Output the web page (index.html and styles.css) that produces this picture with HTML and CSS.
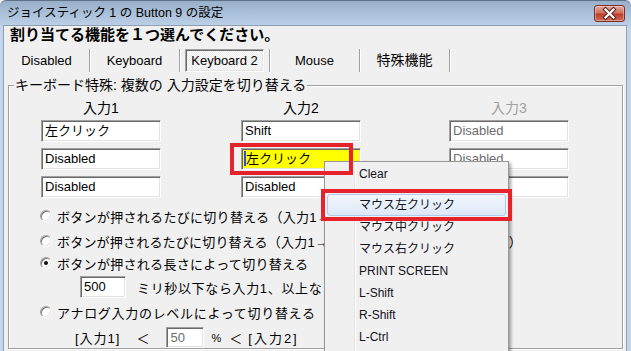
FILE: index.html
```html
<!DOCTYPE html>
<html lang="ja">
<head>
<meta charset="utf-8">
<title>ジョイスティック 1 の Button 9 の設定</title>
<link rel="stylesheet" href="styles.css">
</head>
<body>

<div class="dlg">
	<div class="dlg-title">
		<span class="dlg-title-text">ジョイスティック 1 の Button 9 の設定</span>
		<span class="dlg-close">
			<svg width="29" height="15" viewBox="0 0 29 15">
				<path d="M10.5 3.5 L18.5 11.5 M18.5 3.5 L10.5 11.5" stroke="#5b231d" stroke-width="4.2" stroke-linecap="square"/>
				<path d="M10.5 3.5 L18.5 11.5 M18.5 3.5 L10.5 11.5" stroke="#fff" stroke-width="2.2" stroke-linecap="square"/>
			</svg>
		</span>
	</div>

	<div class="dlg-body">
		<h1 class="dlg-head">割り当てる機能を１つ選んでください。</h1>

		<div class="tabs">
			<span class="tab tab-first">Disabled</span>
			<span class="tab">Keyboard</span>
			<span class="tab"><span class="tab-on">Keyboard 2</span></span>
			<span class="tab">Mouse</span>
			<span class="tab tab-jp">特殊機能</span>
		</div>

		<fieldset class="grp">
			<legend>キーボード特殊: 複数の 入力設定を切り替える</legend>

			<div class="cols">
				<div class="col">
					<div class="col-h">入力1</div>
					<div class="tb">左クリック</div>
					<div class="tb">Disabled</div>
					<div class="tb">Disabled</div>
				</div>
				<div class="col">
					<div class="col-h">入力2</div>
					<div class="tb">Shift</div>
					<div class="tb tb-hl"><i class="caret"></i>左クリック</div>
					<div class="tb">Disabled</div>
				</div>
				<div class="col col-off">
					<div class="col-h">入力3</div>
					<div class="tb">Disabled</div>
					<div class="tb">Disabled</div>
					<div class="tb">Disabled</div>
				</div>
			</div>

			<div class="opts">
				<div class="opt opt-1"><i class="rb"></i>ボタンが押されるたびに切り替える（入力1→入力2）</div>
				<div class="opt opt-2"><i class="rb"></i>ボタンが押されるたびに切り替える（入力1→入力2→入力3→入力1→…の順）</div>
				<div class="opt opt-3"><i class="rb rb-on"></i>ボタンが押される長さによって切り替える</div>
				<div class="opt-sub">
					<div class="tb tb-ms">500</div>
					<span class="sub-text">ミリ秒以下なら入力1、以上なら入力2</span>
				</div>
				<div class="opt opt-4"><i class="rb"></i>アナログ入力のレベルによって切り替える</div>
				<div class="opt-lv">
					<span class="lv-in">[入力1]</span>
					<span class="lv-lt lv-lt-1">＜</span>
					<div class="tb tb-pc">50</div>
					<span class="lv-pc">%</span>
					<span class="lv-lt lv-lt-2">＜</span>
					<span class="lv-in lv-in-2">[入力2]</span>
				</div>
			</div>
		</fieldset>
	</div>
</div>

<!-- popup menu over the dialog -->
<div class="ctx">
	<div class="ctx-item">Clear</div>
	<div class="ctx-sep"></div>
	<div class="ctx-item ctx-on">マウス左クリック</div>
	<div class="ctx-item">マウス中クリック</div>
	<div class="ctx-item">マウス右クリック</div>
	<div class="ctx-item">PRINT SCREEN</div>
	<div class="ctx-item">L-Shift</div>
	<div class="ctx-item">R-Shift</div>
	<div class="ctx-item">L-Ctrl</div>
</div>

<!-- red annotation boxes -->
<div class="mark mark-field"></div>
<div class="mark mark-item"></div>

</body>
</html>
```

FILE: styles.css
```css
html, body{margin:0; height:100%; overflow:hidden; background:#f0f0f0;}
body{font-family:"Liberation Sans","Noto Sans CJK JP",sans-serif; font-size:13px; color:#000;}

.dlg{
	width:631px;
	height:420px;
	box-sizing:border-box;
	padding:0 4px 0 3px;
	border-top:1px solid #5f7189;
	border-radius:6px 6px 0 0;
	background:linear-gradient(#98afca, #bdd1e8 25px, #c3d6eb 26px, #c3d6eb);
}
.dlg-title{display:flex; align-items:flex-start; height:24px;}
.dlg-title-text{flex:1; padding:4px 0 0 4px; line-height:16px; font-size:12.5px; color:#000;}
.dlg-close{
	width:31px; height:17px;
	margin:4px 2px 0 0;
	box-sizing:border-box;
	border:1px solid #7a2f27;
	border-radius:3px;
	background:linear-gradient(#e5a99e, #d0705f 45%, #bd3f2d 55%, #cf6d57);
	box-shadow:inset 0 0 0 1px rgba(255,255,255,.35);
}
.dlg-close svg{display:block;}

.dlg-body{
	height:395px;
	background:#f0f0f0;
	border:1px solid #8d9db2;
	border-bottom:0;
}
.dlg-head{margin:0 0 0 6px; font-size:15px; line-height:18px; font-weight:bold;}

/* button strip */
.tabs{display:flex; height:23px; margin-top:5px;}
.tab{
	width:89px; flex:none;
	text-align:center; line-height:23px;
	border-right:1px solid #a0a0a0;
	box-shadow:1px 0 0 #fff;
	font-size:13px;
}
.tab-first{width:85px;}
.tab-jp{font-size:14px;}
.tab-on{
	display:block; margin:0 5px 0 5px; height:23px;
	box-sizing:border-box;
	line-height:21px;
	border:1px solid; border-color:#a0a0a0 #fff #fff #a0a0a0;
	box-shadow:inset 1px 1px 0 #696969, inset -1px -1px 0 #e3e3e3;
	background:repeating-conic-gradient(#fff 0 25%, #e9e9e9 0 50%) 0 0/2px 2px;
}

/* group box */
.grp{
	margin:5px 3px 0 4px;
	padding:0;
	min-width:0;
	border:1px solid #a0a0a0;
	box-shadow:1px 1px 0 #fff, inset 1px 1px 0 #fff;
}
.grp legend{
	margin-left:5px; padding:0 1px;
	font-size:14px; line-height:16px;
	background:#f0f0f0;
}
.cols{display:grid; grid-template-columns:200px 208px 120px; margin:7px 0 0 32px;}
.col-h{width:120px; text-align:center; font-size:14px; line-height:16px; margin-bottom:4px;}
.col-off .col-h{color:#a0a0a0;}
.col-off .tb{color:#6d6d6d;}

.tb{
	width:120px; height:22px;
	box-sizing:border-box;
	margin-bottom:6px;
	padding-left:3px;
	line-height:20px;
	white-space:nowrap; overflow:hidden;
	background:#fff;
	border:1px solid; border-color:#a0a0a0 #fff #fff #a0a0a0;
	box-shadow:inset 1px 1px 0 #696969, inset -1px -1px 0 #e3e3e3;
}
.tb:last-child{margin-bottom:0;}
.tb-hl{background:#ffff00;}
.caret{display:inline-block; width:2px; height:15px; margin-left:-1px; vertical-align:-3px; background:#2d50d6;}

/* radio options */
.opts{margin:7px 0 0 31px; letter-spacing:.3px;}
.opt{display:flex; align-items:center; height:22px; white-space:nowrap;}
.opt-2{margin-top:3px; letter-spacing:.2px;}
.opt-4{margin-top:3px; letter-spacing:.7px;}
.rb{
	width:12px; height:12px; flex:none;
	margin-right:5px;
	box-sizing:border-box;
	border-radius:50%;
	border:1px solid; border-color:#a0a0a0 #f8f8f8 #f8f8f8 #a0a0a0;
	box-shadow:inset 1px 1px 0 #7a7a7a, inset -1px -1px 0 #e3e3e3;
	background:#fff;
	display:flex; align-items:center; justify-content:center;
}
.rb-on::after{content:""; width:4px; height:4px; border-radius:50%; background:#111;}

.opt-sub{display:flex; align-items:center; margin-top:2px; padding-left:40px; white-space:nowrap;}
.tb-ms{width:46px; margin:0; letter-spacing:0;}
.sub-text{margin-left:11px; letter-spacing:.65px;}

.opt-lv{display:flex; align-items:center; height:21px; margin-top:4px; padding-left:35px; white-space:nowrap; letter-spacing:0;}
.lv-in{letter-spacing:1px;}
.lv-lt-1{margin-left:16px;}
.tb-pc{width:38px; height:21px; margin:0 0 0 17px; color:#6d6d6d; line-height:19px;}
.lv-pc{margin-left:7px; font-size:11px;}
.lv-lt-2{margin-left:8px;}
.lv-in-2{margin-left:6px; letter-spacing:2px;}

/* popup menu */
.ctx{
	position:absolute; left:324px; top:161px;
	width:185px; height:230px;
	box-sizing:border-box;
	padding:1px 2px;
	border:1px solid #979797;
	background:#f0f0f0 linear-gradient(to right, transparent 29px, #e2e3e3 29px 30px, #fff 30px 31px, transparent 31px);
	box-shadow:2px 2px 3px rgba(0,0,0,.35);
	font-size:12px;
	color:#121222;
}
.ctx-item{height:22px; line-height:20px; padding-left:31px; border:1px solid transparent; box-sizing:border-box; border-radius:3px; white-space:nowrap;}
.ctx-on{border-color:#aecbef; background:linear-gradient(#f3f7fd, #dce8f7);}
.ctx-sep{height:9px; margin-left:30px; background:linear-gradient(transparent 4px, #e0e0e0 4px 5px, #fff 5px 6px, transparent 6px);}

.mark{position:absolute; box-sizing:border-box; border:4px solid #e6222b;}
.mark-field{left:230px; top:143px; width:123px; height:32px;}
.mark-item{left:321px; top:189px; width:191px; height:32px;}
```
